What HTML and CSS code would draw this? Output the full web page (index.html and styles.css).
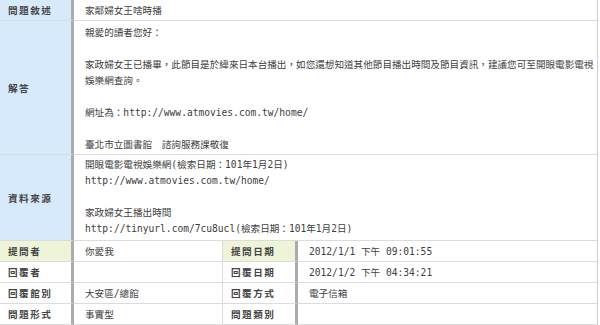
FILE: index.html
```html
<!DOCTYPE html>
<html lang="zh-Hant">
<head>
<meta charset="utf-8">
<title>問題</title>
<link rel="stylesheet" href="styles.css">
</head>
<body>
<div class="qa">
  <div class="lab blue r1">問題敘述</div>
  <div class="val wide r1">家鄰婦女王啥時播</div>

  <div class="lab blue r2">解答</div>
  <div class="val wide text r2">親愛的讀者您好：<br><br>家政婦女王已播畢，此節目是於緯來日本台播出，如您還想知道其他節目播出時間及節目資訊，建議您可至開眼電影電視<br>娛樂網查詢。<br><br>網址為：http://www.atmovies.com.tw/home/<br><br>臺北市立圖書館　諮詢服務課敬復</div>

  <div class="lab blue r3">資料來源</div>
  <div class="val wide text r3">開眼電影電視娛樂網(檢索日期：101年1月2日)<br>http://www.atmovies.com.tw/home/<br><br>家政婦女王播出時間<br>http://tinyurl.com/7cu8ucl(檢索日期：101年1月2日)</div>

  <div class="lab green sm">提問者</div>
  <div class="val mid sm">你愛我</div>
  <div class="lab green sm">提問日期</div>
  <div class="val sm">2012/1/1 下午 09:01:55</div>

  <div class="lab sm">回覆者</div>
  <div class="val mid sm"></div>
  <div class="lab sm">回覆日期</div>
  <div class="val sm">2012/1/2 下午 04:34:21</div>

  <div class="lab sm">回覆館別</div>
  <div class="val mid sm">大安區/總館</div>
  <div class="lab sm">回覆方式</div>
  <div class="val sm">電子信箱</div>

  <div class="lab sm">問題形式</div>
  <div class="val mid sm">事實型</div>
  <div class="lab sm">問題類別</div>
  <div class="val sm"></div>
</div>
</body>
</html>
```

FILE: styles.css
```css
html, body {
  margin: 0;
  padding: 0;
  background: #ffffff;
}

.qa {
  display: grid;
  grid-template-columns: 74px 149px 75px 299px;
  width: 598px;
  box-sizing: border-box;
  border-right: 1px solid #cfcfcf;
  font-family: "DejaVu Sans Mono", "Noto Sans CJK TC", monospace;
  font-size: 9.6px;
  color: #404040;
}

.qa > div {
  box-sizing: border-box;
  border-bottom: 1px solid #dcdcdc;
}

.lab {
  display: flex;
  align-items: center;
  padding-left: 8px;
  font-weight: bold;
  letter-spacing: 1.5px;
  color: #444444;
  background: #ffffff;
  border-right: 3px solid #ababab;
}

.blue {
  background: #d6eafc;
}

.green {
  background: #eef4d8;
}

.val {
  display: flex;
  align-items: center;
  padding: 0 11px;
  white-space: nowrap;
}

.wide {
  grid-column: span 3;
}

.mid {
  border-right: 1px solid #dcdcdc;
}

.text {
  display: block;
  line-height: 16px;
}

.r1 {
  height: 21px;
}

.r2 {
  height: 134px;
}

.r2.text {
  padding-top: 4px;
}

.r3 {
  height: 86px;
}

.r3.text {
  padding-top: 2px;
}

.sm {
  height: 21px;
}
```
